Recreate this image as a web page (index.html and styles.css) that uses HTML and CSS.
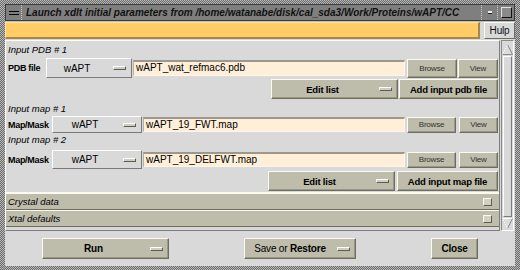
FILE: index.html
```html
<!DOCTYPE html>
<html lang="en">

<head>
    <meta charset="UTF-8">
    <meta name="viewport" content="width=device-width, initial-scale=1.0">
    <title>Launch xdlt initial parameters</title>
    <link rel="stylesheet" href="styles.css">
</head>

<body>
    <div class="window">
        <div class="titlebar">
            <div class="wm-menu"><span class="bars"></span></div>
            <div class="wm-title">Launch xdlt initial parameters from /home/watanabe/disk/cal_sda3/Work/Proteins/wAPT/CC</div>
            <div class="wm-min"><span></span></div>
            <div class="wm-max"><span></span></div>
        </div>
        <div class="client">
            <div class="topbar">
                <div class="status"></div>
                <div class="btn help">Hulp</div>
            </div>
            <div class="main">
                <div class="panel">
                    <div class="section sec-pdb">Input PDB # 1</div>
                    <div class="row row-pdb">
                        <span class="label lbl-pdb">PDB file</span>
                        <div class="menu menu-pdb"><span class="txt">wAPT</span><span class="ind"></span></div>
                        <div class="entry entry-pdb">wAPT_wat_refmac6.pdb</div>
                        <div class="btn small browse">Browse</div>
                        <div class="btn small view">View</div>
                    </div>
                    <div class="row actions act-pdb">
                        <div class="btn edit"><span class="txt">Edit list</span><span class="ind"></span></div>
                        <div class="btn add add-pdb">Add input pdb file</div>
                    </div>
                    <div class="section sec-map1">Input map # 1</div>
                    <div class="row row-map">
                        <span class="label lbl-map">Map/Mask</span>
                        <div class="menu menu-map"><span class="txt">wAPT</span><span class="ind"></span></div>
                        <div class="entry entry-map">wAPT_19_FWT.map</div>
                        <div class="btn small browse browse-map">Browse</div>
                        <div class="btn small view view-map">View</div>
                    </div>
                    <div class="section sec-map2">Input map # 2</div>
                    <div class="row row-map row-map2">
                        <span class="label lbl-map">Map/Mask</span>
                        <div class="menu menu-map"><span class="txt">wAPT</span><span class="ind"></span></div>
                        <div class="entry entry-map">wAPT_19_DELFWT.map</div>
                        <div class="btn small browse browse-map">Browse</div>
                        <div class="btn small view view-map">View</div>
                    </div>
                    <div class="row actions act-map">
                        <div class="btn edit"><span class="txt">Edit list</span><span class="ind"></span></div>
                        <div class="btn add add-map">Add input map file</div>
                    </div>
                    <div class="fold fold-first">
                        <span>Crystal data</span>
                        <span class="check"></span>
                    </div>
                    <div class="fold">
                        <span>Xtal defaults</span>
                        <span class="check"></span>
                    </div>
                </div>
                <div class="scrollbar">
                    <svg class="arrow" width="11" height="11" viewBox="0 0 11 11">
                        <polygon points="5.5,0.5 10.5,10.5 0.5,10.5" fill="#dcdcdc" stroke="#8a8a8a" />
                        <polyline points="0.5,10.5 5.5,0.5" fill="none" stroke="#ffffff" />
                    </svg>
                    <div class="slider"></div>
                    <svg class="arrow" width="11" height="11" viewBox="0 0 11 11">
                        <polygon points="0.5,0.5 10.5,0.5 5.5,10.5" fill="#dcdcdc" stroke="#8a8a8a" />
                        <polyline points="0.5,0.5 10.5,0.5" fill="none" stroke="#ffffff" />
                        <polyline points="0.5,0.5 5.5,10.5" fill="none" stroke="#ffffff" />
                    </svg>
                </div>
            </div>
            <div class="footer">
                <div class="btn run"><span class="txt">Run</span><span class="ind"></span></div>
                <div class="btn save"><span class="txt"><span class="thin">Save or</span> Restore</span><span class="ind"></span></div>
                <div class="btn close">Close</div>
            </div>
        </div>
    </div>
</body>

</html>
```

FILE: styles.css
```css
* {
    box-sizing: border-box;
}

body {
    margin: 0;
    padding: 0;
    font-family: "Liberation Sans", Arial, sans-serif;
    font-size: 9px;
    font-weight: bold;
    color: #000;
}

.window {
    width: 520px;
    height: 270px;
    padding: 4px 5px 4px 5px;
    background: repeating-conic-gradient(#6c6c6c 0 25%, #b8b8b8 0 50%) 0 0 / 2px 2px;
    display: flex;
    flex-direction: column;
}

/* window manager title */
.titlebar {
    height: 17px;
    background: #7f7f7f;
    border: 1px solid #3c3c3c;
    display: flex;
    align-items: stretch;
}

.wm-menu {
    width: 16px;
    border-right: 1px dotted #c8c8c8;
    display: flex;
    align-items: center;
    justify-content: center;
}

.wm-menu .bars {
    width: 10px;
    height: 4px;
    border-top: 1px solid #000;
    border-bottom: 1px solid #000;
}

.wm-title {
    flex: 1;
    padding-left: 4px;
    font-size: 10px;
    font-style: italic;
    line-height: 15px;
    white-space: nowrap;
    overflow: hidden;
    color: #111;
}

.wm-min,
.wm-max {
    display: flex;
    align-items: center;
    justify-content: center;
    border-left: 1px dotted #c8c8c8;
}

.wm-min {
    width: 16px;
}

.wm-min span {
    width: 4px;
    height: 3px;
    background: #eee;
    border-bottom: 1px solid #222;
}

.wm-max {
    width: 17px;
}

.wm-max span {
    width: 11px;
    height: 11px;
    border: 1px solid;
    border-color: #e0e0e0 #111 #111 #e0e0e0;
    background: #8a8a8a;
}

.client {
    flex: 1;
    background: #d9d9d9;
    border-top: 1px solid #bdbdbd;
    display: flex;
    flex-direction: column;
}

.topbar {
    height: 17px;
    display: flex;
    align-items: stretch;
}

.status {
    width: 475px;
    background: #ffcc66;
    border: 1px solid;
    border-width: 1px 2px 2px 1px;
    border-color: #ffe4a6 #a58847 #a58847 #ffe4a6;
}

.btn {
    background: #bebcaa;
    border: 1px solid;
    border-color: #fbfbef #6e6d60 #6e6d60 #fbfbef;
    box-shadow: inset -1px -1px 0 #9a9886;
    display: flex;
    align-items: center;
    justify-content: center;
    white-space: nowrap;
    letter-spacing: -0.2px;
}

.help {
    width: 31px;
    margin-left: 4px;
    background: #d9d9d9;
    box-shadow: none;
    font-weight: normal;
    font-size: 10px;
    color: #111;
}

.main {
    height: 191px;
    margin-top: 1px;
    display: flex;
}

.panel {
    width: 495px;
    border: 1px solid;
    border-color: #ffffff #7e7e7e #7e7e7e #ffffff;
    display: flex;
    flex-direction: column;
}

.section {
    padding-left: 2px;
    font-weight: normal;
    font-style: italic;
    font-size: 9.5px;
    line-height: 11px;
}

.sec-pdb {
    height: 16px;
    padding-top: 3px;
}

.sec-map1 {
    height: 17px;
    padding-top: 4px;
}

.sec-map2 {
    height: 17px;
    padding-top: 1px;
}

.row {
    display: flex;
    align-items: center;
    padding-left: 2px;
}

.label {
    font-size: 9px;
    letter-spacing: -0.3px;
    white-space: nowrap;
}

.row-pdb {
    height: 20px;
    margin-top: 1px;
}

.lbl-pdb {
    width: 38px;
}

.menu {
    height: 100%;
    background: #d9d9d9;
    border: 1px solid;
    border-color: #ffffff #7a7a7a #7a7a7a #ffffff;
    display: flex;
    align-items: center;
    font-size: 10px;
    font-weight: normal;
}

.menu .txt,
.btn .txt {
    flex: 1;
    text-align: center;
}

.ind {
    width: 13px;
    height: 4px;
    margin: 0 5px 0 6px;
    background: #cfcdbd;
    border: 1px solid;
    border-color: #ffffff #5e5d52 #5e5d52 #ffffff;
}

.menu-pdb {
    width: 86px;
}

.entry {
    height: 16px;
    margin-left: 1px;
    padding-left: 2px;
    background: #ffefd9;
    border: 1px solid;
    border-width: 2px 1px 1px 1px;
    border-color: #9e988c #fff6ea #fff6ea #b6afa2;
    font-size: 10px;
    line-height: 12px;
    font-weight: normal;
    white-space: nowrap;
    overflow: hidden;
}

.entry-pdb {
    width: 272px;
}

.small {
    height: 19px;
    font-size: 8px;
    font-weight: normal;
    color: #333;
}

.browse {
    width: 50px;
    margin-left: 2px;
}

.view {
    width: 40px;
    margin-left: 1px;
}

.actions {
    height: 20px;
    margin-top: 1px;
    justify-content: flex-end;
    padding-right: 1px;
}

.edit {
    width: 127px;
    height: 100%;
    font-size: 9.5px;
}

.add {
    height: 100%;
    font-size: 9.5px;
}

.add-pdb {
    width: 99px;
    margin-left: 1px;
}

.row-map {
    height: 17px;
}

.row-map2 {
    height: 19px;
}

.lbl-map {
    width: 44px;
}

.menu-map {
    width: 90px;
}

.entry-map {
    width: 262px;
    height: 15px;
}

.browse-map {
    width: 49px;
    height: 16px;
}

.view-map {
    width: 39px;
    height: 16px;
    margin-left: 3px;
}

.act-map {
    height: 20px;
    margin-top: 2px;
    margin-bottom: 1px;
}

.add-map {
    width: 101px;
    margin-left: 2px;
}

.fold {
    height: 17px;
    background: #bebcaa;
    border-top: 1px solid #fbfbef;
    border-bottom: 1px solid #6e6d60;
    display: flex;
    align-items: center;
    justify-content: space-between;
    padding: 0 7px 0 2px;
    font-weight: normal;
    font-style: italic;
    font-size: 9.5px;
}

.fold-first {
    height: 18px;
    border-top: 2px solid #fbfbef;
}

.check {
    width: 9px;
    height: 8px;
    background: #d2d0bf;
    border: 1px solid;
    border-color: #fbfbef #5e5d52 #5e5d52 #fbfbef;
}

.scrollbar {
    width: 13px;
    margin-left: 1px;
    border: 1px solid;
    border-color: #8a8a8a #ffffff #ffffff #8a8a8a;
    display: flex;
    flex-direction: column;
    align-items: center;
    padding: 3px 0 1px;
}

.slider {
    flex: 1;
    width: 9px;
    margin: 1px 0;
    border: 1px solid;
    border-color: #ffffff #7a7a7a #7a7a7a #ffffff;
}

.footer {
    flex: 1;
    display: flex;
    align-items: center;
    padding-left: 37px;
}

.run,
.save,
.close {
    height: 21px;
    font-size: 10px;
}

.run {
    width: 127px;
}

.save {
    width: 112px;
    margin-left: 75px;
}

.save .txt {
    padding-left: 4px;
}

.thin {
    font-weight: normal;
}

.close {
    width: 47px;
    margin-left: 75px;
}
```
